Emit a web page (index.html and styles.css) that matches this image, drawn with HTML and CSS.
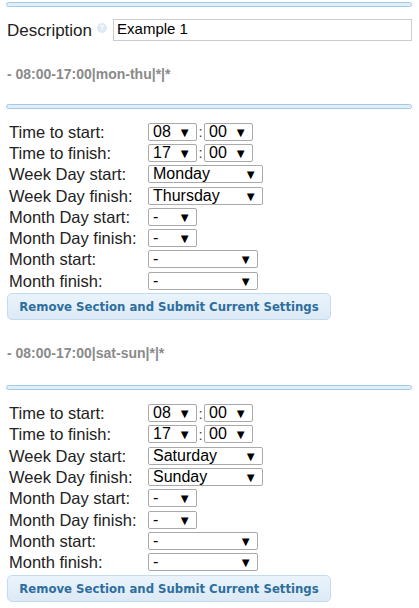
FILE: index.html
```html
<!DOCTYPE html>
<html>
<head>
<meta charset="utf-8">
<link rel="stylesheet" href="styles.css">
</head>
<body>
<div class="page">
  <div class="bar"></div>
  <div class="desc">
    <span class="desc-label">Description</span>
    <span class="help">?</span>
    <span class="desc-input">Example 1</span>
  </div>
  <div class="summary">- 08:00-17:00|mon-thu|*|*</div>
  <div class="bar"></div>
  <div class="form">
    <span class="lbl">Time to start:</span>
    <span class="ctl"><span class="sel w-s">08<i>▼</i></span><span class="colon">:</span><span class="sel w-s">00<i>▼</i></span></span>
    <span class="lbl">Time to finish:</span>
    <span class="ctl"><span class="sel w-s">17<i>▼</i></span><span class="colon">:</span><span class="sel w-s">00<i>▼</i></span></span>
    <span class="lbl">Week Day start:</span>
    <span class="ctl"><span class="sel w-l">Monday<i>▼</i></span></span>
    <span class="lbl">Week Day finish:</span>
    <span class="ctl"><span class="sel w-l">Thursday<i>▼</i></span></span>
    <span class="lbl">Month Day start:</span>
    <span class="ctl"><span class="sel w-s">-<i>▼</i></span></span>
    <span class="lbl">Month Day finish:</span>
    <span class="ctl"><span class="sel w-s">-<i>▼</i></span></span>
    <span class="lbl">Month start:</span>
    <span class="ctl"><span class="sel w-m">-<i>▼</i></span></span>
    <span class="lbl">Month finish:</span>
    <span class="ctl"><span class="sel w-m">-<i>▼</i></span></span>
  </div>
  <div class="btn">Remove Section and Submit Current Settings</div>
  <div class="summary s2">- 08:00-17:00|sat-sun|*|*</div>
  <div class="bar"></div>
  <div class="form">
    <span class="lbl">Time to start:</span>
    <span class="ctl"><span class="sel w-s">08<i>▼</i></span><span class="colon">:</span><span class="sel w-s">00<i>▼</i></span></span>
    <span class="lbl">Time to finish:</span>
    <span class="ctl"><span class="sel w-s">17<i>▼</i></span><span class="colon">:</span><span class="sel w-s">00<i>▼</i></span></span>
    <span class="lbl">Week Day start:</span>
    <span class="ctl"><span class="sel w-l">Saturday<i>▼</i></span></span>
    <span class="lbl">Week Day finish:</span>
    <span class="ctl"><span class="sel w-l">Sunday<i>▼</i></span></span>
    <span class="lbl">Month Day start:</span>
    <span class="ctl"><span class="sel w-s">-<i>▼</i></span></span>
    <span class="lbl">Month Day finish:</span>
    <span class="ctl"><span class="sel w-s">-<i>▼</i></span></span>
    <span class="lbl">Month start:</span>
    <span class="ctl"><span class="sel w-m">-<i>▼</i></span></span>
    <span class="lbl">Month finish:</span>
    <span class="ctl"><span class="sel w-m">-<i>▼</i></span></span>
  </div>
  <div class="btn">Remove Section and Submit Current Settings</div>
</div>
</body>
</html>
```
FILE: styles.css
```css
html, body {
  margin: 0;
  padding: 0;
  background: #ffffff;
}
.page {
  padding: 2px 7px 0 6px;
  font-family: "Liberation Sans", Arial, sans-serif;
  color: #222222;
}
.bar {
  height: 3px;
  border: 1px solid #a6c9e2;
  background: #dfeffc;
  border-radius: 3px;
}
.desc {
  display: flex;
  align-items: center;
  margin-top: 10px;
  padding-left: 1px;
}
.desc-label {
  font-size: 17px;
  line-height: 22px;
  padding-top: 3px;
}
.help {
  width: 10px;
  height: 10px;
  border-radius: 50%;
  background: #dde9f5;
  color: #ffffff;
  font-size: 8px;
  line-height: 10px;
  text-align: center;
  font-weight: bold;
  margin: -3px 6px 0 5px;
}
.desc-input {
  flex: 1;
  height: 20px;
  border: 1px solid #cccccc;
  font-size: 15px;
  line-height: 18px;
  padding: 0 3px;
  color: #000000;
}
.summary {
  margin-top: 24px;
  font-size: 14px;
  font-weight: bold;
  color: #8a8a8a;
  line-height: 16px;
  padding-left: 1px;
}
.summary + .bar {
  margin-top: 22px;
}
.s2 {
  margin-top: 25px;
}
.summary.s2 + .bar {
  margin-top: 24px;
}
.form {
  display: grid;
  grid-template-columns: 139px auto;
  grid-auto-rows: 21.3px;
  align-items: center;
  margin-top: 12px;
  padding-left: 3px;
}
.lbl {
  font-size: 16.5px;
  line-height: 18px;
}
.ctl {
  display: flex;
  align-items: center;
}
.sel {
  box-sizing: border-box;
  height: 18px;
  border: 1px solid #a9a9a9;
  border-radius: 2px;
  font-size: 16px;
  line-height: 16px;
  padding-left: 4px;
  display: flex;
  justify-content: space-between;
  color: #000000;
  background: #ffffff;
}
.sel i {
  font-style: normal;
  font-size: 13px;
  padding-right: 5px;
  line-height: 17px;
}
.w-s { width: 49px; }
.w-m { width: 110px; }
.w-l { width: 115px; }
.colon {
  width: 7px;
  font-size: 15px;
  text-align: center;
  color: #444;
}
.btn {
  margin-top: 2px;
  width: 324px;
  box-sizing: border-box;
  height: 27px;
  border: 1px solid #c5dbec;
  border-radius: 5px;
  background: linear-gradient(#eaf3fb, #dceaf6);
  color: #2e6e9e;
  font-family: "DejaVu Sans Condensed", "DejaVu Sans", sans-serif;
  font-weight: bold;
  font-size: 13px;
  line-height: 25px;
  text-align: center;
  margin-left: 1px;
}
```
